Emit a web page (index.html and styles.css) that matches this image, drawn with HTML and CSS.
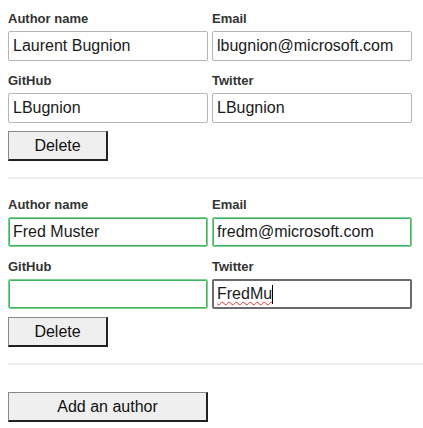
FILE: index.html
```html
<!DOCTYPE html>
<html>
<head>
<meta charset="utf-8">
<link rel="stylesheet" href="styles.css">
</head>
<body>
<div class="page">
  <section class="author">
    <div class="grid">
      <div class="field">
        <label class="label">Author name</label>
        <input class="input" value="Laurent Bugnion">
      </div>
      <div class="field">
        <label class="label">Email</label>
        <input class="input" value="lbugnion@microsoft.com">
      </div>
      <div class="field">
        <label class="label">GitHub</label>
        <input class="input" value="LBugnion">
      </div>
      <div class="field">
        <label class="label">Twitter</label>
        <input class="input" value="LBugnion">
      </div>
    </div>
    <button class="btn">Delete</button>
  </section>
  <hr class="sep">
  <section class="author second">
    <div class="grid">
      <div class="field">
        <label class="label">Author name</label>
        <input class="input valid" value="Fred Muster">
      </div>
      <div class="field">
        <label class="label">Email</label>
        <input class="input valid" value="fredm@microsoft.com">
      </div>
      <div class="field">
        <label class="label">GitHub</label>
        <input class="input valid" value="">
      </div>
      <div class="field">
        <label class="label">Twitter</label>
        <div class="input focused"><span class="spell">FredMu</span><span class="caret"></span></div>
      </div>
    </div>
    <button class="btn">Delete</button>
  </section>
  <hr class="sep">
  <div class="add">
    <button class="btn wide">Add an author</button>
  </div>
</div>
</body>
</html>
```
FILE: styles.css
```css
html, body {
  margin: 0;
  padding: 0;
  background: #fff;
}
body {
  font-family: "Liberation Sans", Arial, sans-serif;
  color: #222;
}
.page {
  padding: 11px 0 0 8px;
}
.author {
  display: flex;
  flex-direction: column;
  align-items: flex-start;
  gap: 8px;
}
.grid {
  display: grid;
  grid-template-columns: 200px 200px;
  column-gap: 4px;
  row-gap: 12px;
}
.field {
  display: flex;
  flex-direction: column;
  gap: 4px;
}
.label {
  font-size: 13px;
  font-weight: bold;
  line-height: 16px;
  color: #333;
}
.input {
  box-sizing: border-box;
  width: 200px;
  height: 30px;
  margin: 0;
  padding: 0 4px;
  border: 1px solid #b5b5b5;
  border-radius: 2px;
  font-family: "Liberation Sans", Arial, sans-serif;
  font-size: 16px;
  color: #1a1a1a;
  background: #fff;
  outline: none;
}
.valid {
  border-color: #7fcf93;
  outline: 1px solid #3fb45f;
  outline-offset: -2px;
}
.focused {
  display: flex;
  align-items: center;
  border: 2px solid #6b6b6b;
  padding: 0 3px;
}
.spell {
  text-decoration: underline wavy #e53030;
  text-decoration-thickness: 1px;
  text-underline-offset: 2px;
  text-decoration-skip-ink: none;
}
.caret {
  display: inline-block;
  width: 1px;
  height: 19px;
  background: #000;
}
.btn {
  box-sizing: border-box;
  width: 100px;
  height: 30px;
  margin: 0;
  padding: 0;
  background: #efefef;
  border-style: solid;
  border-width: 1px 2px 2px 1px;
  border-color: #8a8a8a #222 #222 #8a8a8a;
  font-family: "Liberation Sans", Arial, sans-serif;
  font-size: 16px;
  color: #111;
}
.wide {
  width: 200px;
}
.sep {
  height: 0;
  margin: 16px 0 0 0;
  border: 0;
  border-top: 2px solid #eeeeee;
}
.second {
  margin-top: 18px;
}
.add {
  padding-top: 27px;
}
```
